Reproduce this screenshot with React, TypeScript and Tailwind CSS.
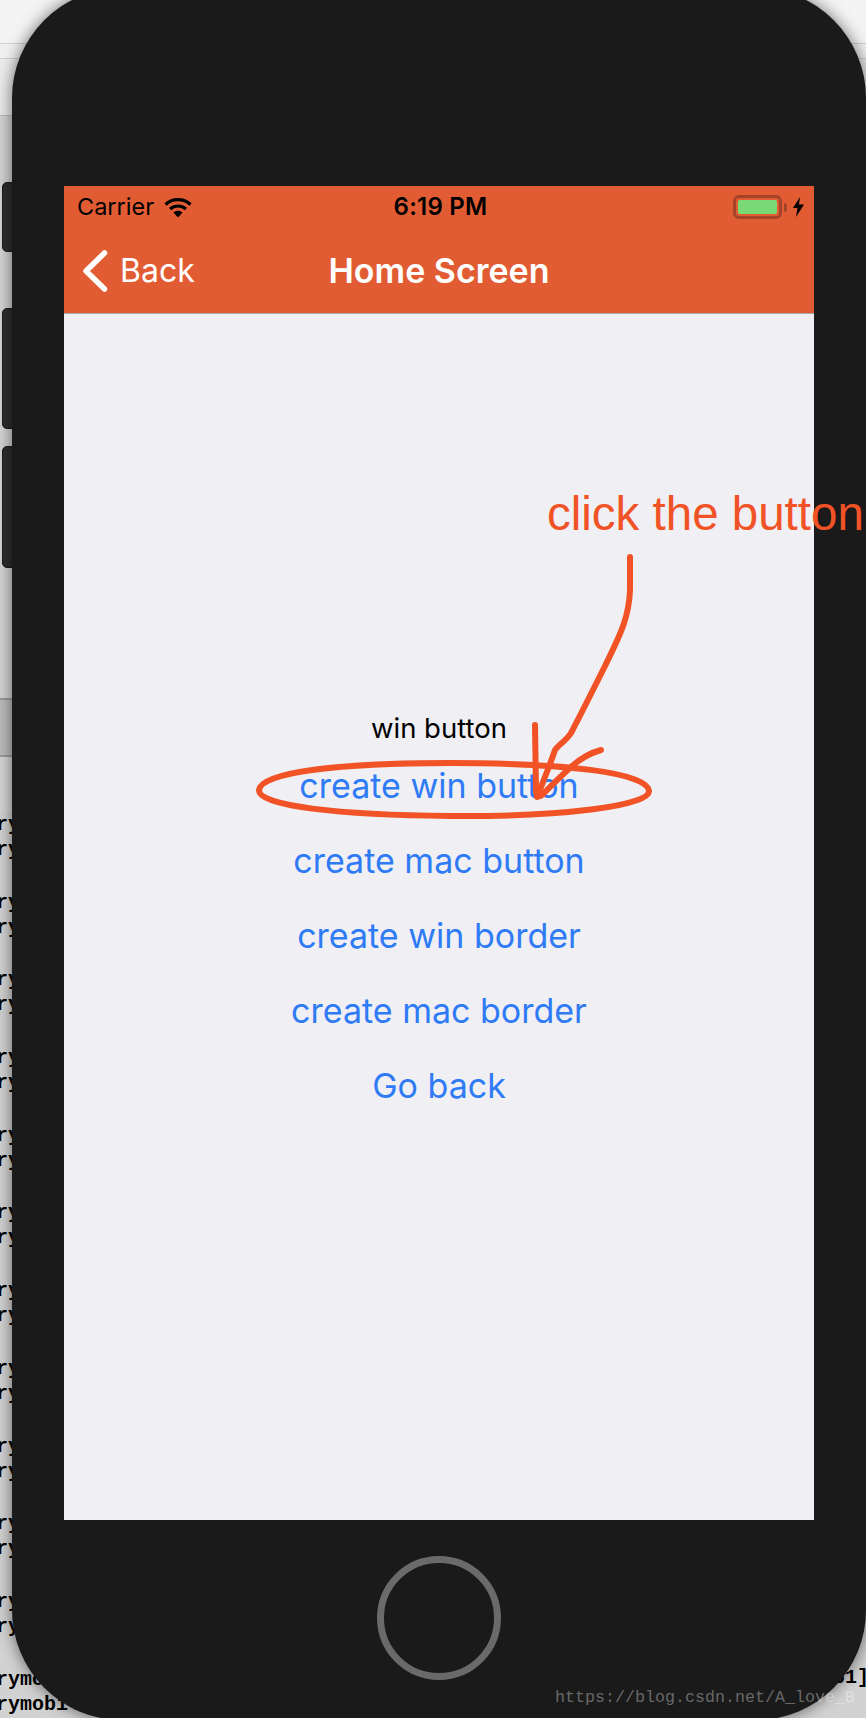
import React from 'react';

const logRows = Array.from({ length: 12 });
const buttons = ['create win button', 'create mac button', 'create win border', 'create mac border', 'Go back'];

const Wifi = () => (
    <svg width="28" height="21" viewBox="0 0 28 21" fill="none" stroke="black" strokeWidth="3.2">
        <path d="M1.5 7.5 C8.5 1 19.5 1 26.5 7.5" />
        <path d="M6 12 C10.5 8 17.5 8 22 12" />
        <path d="M9.5 15.5 L14 20.5 L18.5 15.5 C16 13 12 13 9.5 15.5 Z" fill="black" stroke="none" />
    </svg>
);

const Bolt = () => (
    <svg width="11" height="20" viewBox="0 0 11 20" fill="black">
        <polygon points="7,0 0,11 4.5,11 3,20 11,7.5 6,7.5" />
    </svg>
);

const Back = () => (
    <svg width="26" height="42" viewBox="0 0 26 42" fill="none" stroke="white" strokeWidth="5.5" strokeLinecap="round" strokeLinejoin="round">
        <path d="M22.5 3 L4 21 L22.5 39" />
    </svg>
);

const SideKey = ({ className }: { className: string }) => (
    <div className={`absolute left-[2px] w-[13px] rounded-l-[5px] bg-[#2d2d2d] border border-[#1a1a1a] ${className}`} />
);

const App = () => {
    return (
        <div className="relative w-[866px] h-[1718px] overflow-hidden bg-[#d2d2d2] font-['Inter',sans-serif]">
            {/* desktop behind the simulator */}
            <div className="absolute inset-0 flex flex-col">
                <div className="shrink-0 h-[44px] bg-[#f4f4f4] border-b border-[#d0d0d0]" />
                <div className="shrink-0 h-[15px] bg-[#f0f0f0] border-b border-[#d0d0d0]" />
                <div className="shrink-0 h-[57px] bg-[#ebebeb] border-b border-[#bdbdbd]" />
                <div className="shrink-0 h-[584px] bg-[#d4d4d4] border-b-2 border-[#9c9c9c]" />
                <div className="shrink-0 h-[57px] bg-[#bcbcbc] border-b-2 border-[#9c9c9c]" />
                <div className="shrink-0 h-[55px] bg-[#d6d6d6]" />
                <div className="shrink-0 flex flex-col font-['Liberation_Mono',monospace] font-bold text-[20px] leading-[25px] text-black">
                    {logRows.map((_, i) => (
                        <div key={i} className="shrink-0 h-[77.7px]">
                            <div className="h-[25px] -ml-[4px]">rymobile</div>
                            <div className="h-[25px] -ml-[4px]">rymobile</div>
                        </div>
                    ))}
                </div>
            </div>
            <div className="absolute right-[-3px] top-[1665px] font-['Liberation_Mono',monospace] font-bold text-[20px] leading-[25px] text-black">61]</div>

            <SideKey className="top-[182px] h-[70px]" />
            <SideKey className="top-[308px] h-[121px]" />
            <SideKey className="top-[446px] h-[122px]" />

            {/* phone */}
            <div className="relative ml-3 -mt-3 w-[854px] h-[1732px] rounded-[110px] bg-[#1a1a1a] shadow-[0_0_16px_rgba(0,0,0,0.55)] pt-[198px] flex flex-col">
                <div className="ml-[52px] w-[750px] h-[1334px] bg-[#efeff4] flex flex-col">
                    <div className="bg-[#e25c33] border-b border-[#a9a9ab]">
                        <div className="h-[42px] grid grid-cols-[1fr_auto_1fr] items-center pl-[13px] pr-[10px] text-black">
                            <div className="flex items-center gap-[10px] text-[23.5px]">
                                <span>Carrier</span>
                                <Wifi />
                            </div>
                            <div className="text-[24px] font-semibold tracking-[0.01em]">6:19 PM</div>
                            <div className="flex items-center justify-end">
                                <div className="w-[49px] h-[24px] rounded-[6px] border-[3px] border-[#a5432a] p-[2px]">
                                    <div className="w-full h-full rounded-[2px] bg-[#79d974]" />
                                </div>
                                <div className="w-[3px] h-[9px] ml-[2px] rounded-r-[3px] bg-[#a5432a]" />
                                <div className="ml-[6px] flex"><Bolt /></div>
                            </div>
                        </div>
                        <div className="h-[85px] grid grid-cols-[1fr_auto_1fr] items-center text-white">
                            <div className="flex items-center pl-[18px] gap-[12px] text-[32px]">
                                <Back />
                                <span>Back</span>
                            </div>
                            <div className="text-[34px] font-semibold">Home Screen</div>
                            <div />
                        </div>
                    </div>
                    <div className="flex flex-col items-center pt-[396px]">
                        <div className="h-[38px] flex items-center text-[27.5px] text-black">win button</div>
                        {buttons.map((label) => (
                            <div key={label} className="h-[75px] flex items-center text-[34px] text-[#2f7bf6]">
                                {label}
                            </div>
                        ))}
                    </div>
                </div>
                <div className="mt-[36px] mx-auto w-[124px] h-[124px] rounded-full border-[7px] border-[#6a6a6a]" />
            </div>

            {/* hand drawn annotation */}
            <svg className="absolute left-0 top-0" width="866" height="1718" viewBox="0 0 866 1718" fill="none" stroke="#f15326" strokeWidth="6" strokeLinecap="round" strokeLinejoin="round">
                <path d="M259 790 C261 772 340 763 450 763 C560 763 648 772 649 791 C650 806 560 817 450 816 C340 815 257 806 259 790 Z" />
                <path d="M630 557 L630 590 C629 618 620 635 605 666 C592 692 580 716 571 733 C566 741 558 745 555 750 C550 765 543 782 537 797" />
                <path d="M535 725 L536 790 C536 798 540 798 545 792 C553 784 562 775 571 767 C582 757 590 753 601 750" />
            </svg>
            <div className="absolute left-[547px] top-[487px] font-['Liberation_Sans',sans-serif] text-[47.5px] leading-[54px] text-[#f15326] whitespace-nowrap">click the button</div>

            <div className="absolute left-[555px] top-[1687px] font-['Liberation_Mono',monospace] text-[16.67px] leading-[22px] text-white/35 whitespace-nowrap">https://blog.csdn.net/A_love_B</div>
        </div>
    );
};

export default App;
